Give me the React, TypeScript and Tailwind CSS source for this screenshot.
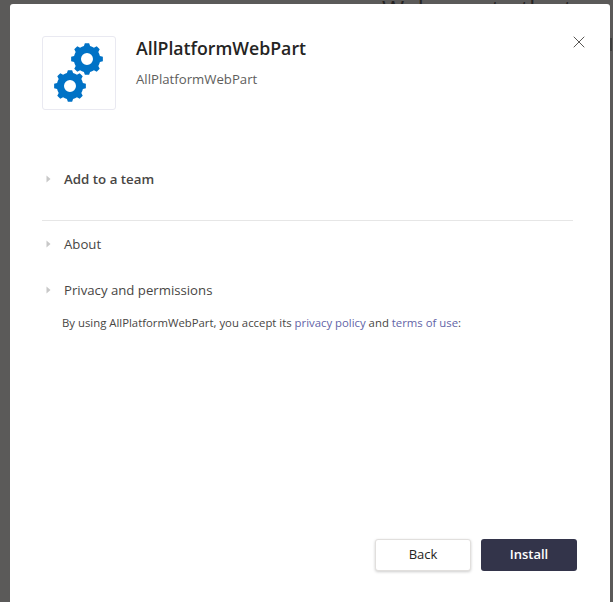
import { X } from "lucide-react"

// 8-tooth gear outline, r is the outer radius
function gearPath(cx: number, cy: number, r: number, hole: number) {
  const teeth = 8
  const inner = r * 0.83
  const points: string[] = []
  for (let i = 0; i < teeth; i++) {
    const a = (i / teeth) * Math.PI * 2 - Math.PI / 2
    const step = (Math.PI * 2) / teeth
    const offsets: [number, number][] = [
      [-0.5, inner],
      [-0.3, inner],
      [-0.17, r],
      [0.17, r],
      [0.3, inner],
    ]
    for (const [o, rad] of offsets) {
      const t = a + o * step
      points.push(`${(cx + Math.cos(t) * rad).toFixed(2)} ${(cy + Math.sin(t) * rad).toFixed(2)}`)
    }
  }
  const ring = `M${cx - hole} ${cy}a${hole} ${hole} 0 1 0 ${hole * 2} 0a${hole} ${hole} 0 1 0 ${-hole * 2} 0Z`
  return `M${points.join("L")}Z${ring}`
}

function Caret() {
  return (
    <svg width="5" height="8" viewBox="0 0 5 8" className="shrink-0">
      <path d="M0.5 0.5L4.5 4L0.5 7.5Z" fill="#c8c8c8" />
    </svg>
  )
}

function Section({ label, bold }: { label: string; bold?: boolean }) {
  return (
    <div className="flex h-5 items-center gap-[13px] pl-[4px]">
      <Caret />
      <span
        className={
          bold
            ? "text-[13.3px] font-semibold leading-5 text-[#484644]"
            : "text-[13.2px] leading-5 text-[#484644]"
        }
      >
        {label}
      </span>
    </div>
  )
}

export default function App() {
  return (
    <div className="relative h-[602px] w-[613px] overflow-hidden bg-[#5b5a59] pl-[10px] pt-1 font-['Open_Sans',sans-serif]">
      {/* page behind the dialog, only the top of the heading peeks out */}
      <div className="absolute left-[382px] top-[-9px] text-[24px] text-[#252423]">Welcome to the t</div>
      <div className="absolute left-[610px] top-[38px] h-[13px] w-[2px] bg-[#3f3f3f]" />

      <div className="relative h-[598px] w-[600px] rounded-t-[3px] bg-white pl-8 pr-[37px] pt-8">
        <button type="button" className="absolute right-[21px] top-[28px] text-[#484644]">
          <X size={20} strokeWidth={1.1} />
        </button>

        <div className="flex items-start gap-5">
          <div className="h-[74px] w-[74px] rounded-[3px] border border-[#e9e9f1]">
            <svg width="72" height="72" viewBox="43 37 72 72">
              <path d={gearPath(87, 59, 16, 6)} fill="#0072c6" fillRule="evenodd" />
              <path d={gearPath(70, 86, 16, 6)} fill="#0072c6" fillRule="evenodd" />
            </svg>
          </div>
          <div className="pt-[1px]">
            <div className="text-[17.7px] font-semibold leading-[22px] text-[#252423]">AllPlatformWebPart</div>
            <div className="mt-[10px] text-[13.2px] leading-5 text-[#605e5c]">AllPlatformWebPart</div>
          </div>
        </div>

        <div className="mt-[59px] border-b border-[#e6e6e6] pb-[31px]">
          <Section label="Add to a team" bold />
        </div>
        <div className="mt-[13px]">
          <Section label="About" />
        </div>
        <div className="mt-[26px]">
          <Section label="Privacy and permissions" />
        </div>
        <p className="mt-[13px] pl-5 text-[11.35px] leading-5 text-[#484644]">
          By using AllPlatformWebPart, you accept its <a className="text-[#6264a7]">privacy policy</a> and{" "}
          <a className="text-[#6264a7]">terms of use</a>:
        </p>

        <div className="absolute bottom-[31px] right-[33px] flex gap-[10px]">
          <button
            type="button"
            className="h-8 w-[96px] rounded-[3px] border border-[#e1dfdd] bg-white text-[13px] text-[#252423] shadow-[0_1px_3px_rgba(0,0,0,0.2)]"
          >
            Back
          </button>
          <button
            type="button"
            className="h-8 w-[96px] rounded-[3px] bg-[#33344a] text-[13px] font-semibold text-white"
          >
            Install
          </button>
        </div>
      </div>
    </div>
  )
}
